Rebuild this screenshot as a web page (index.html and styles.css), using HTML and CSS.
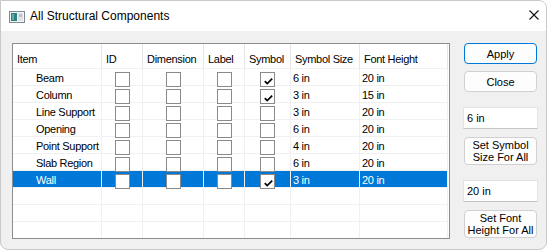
FILE: index.html
```html
<!DOCTYPE html>
<html lang="en">
<head>
  <meta charset="UTF-8">
  <meta name="viewport" content="width=device-width, initial-scale=1.0">
  <title>All Structural Components</title>
  <link rel="stylesheet" href="styles.css">
</head>
<body>
  <div class="window">
    <div class="titlebar">
      <svg class="app-icon" width="16" height="12" viewBox="0 0 16 12">
        <rect x="0.5" y="0.5" width="15" height="11" fill="#f4f4f4" stroke="#7d8a90"/>
        <rect x="2" y="2" width="6" height="8" fill="#2f7f86"/>
        <rect x="3" y="3" width="2" height="6" fill="#5fb0a0"/>
        <rect x="9" y="2" width="5" height="8" fill="#dfe3e6"/>
        <rect x="10" y="3" width="3" height="3" fill="#b9c3c9"/>
      </svg>
      <span class="title">All Structural Components</span>
      <svg class="close" width="10" height="10" viewBox="0 0 10 10">
        <path d="M0.5 0.5 L9.5 9.5 M9.5 0.5 L0.5 9.5" stroke="#111" stroke-width="1.1" fill="none"/>
      </svg>
    </div>

    <div class="content">
      <div class="list">
        <table class="grid">
          <colgroup>
            <col class="c-item"><col class="c-id"><col class="c-dim"><col class="c-label">
            <col class="c-sym"><col class="c-size"><col class="c-font">
          </colgroup>
          <thead>
            <tr>
              <th>Item</th><th>ID</th><th>Dimension</th><th>Label</th>
              <th>Symbol</th><th>Symbol Size</th><th>Font Height</th>
            </tr>
          </thead>
          <tbody>
            <tr>
              <td class="item">Beam</td>
              <td class="chk"><span class="box"></span></td>
              <td class="chk"><span class="box"></span></td>
              <td class="chk"><span class="box"></span></td>
              <td class="chk"><span class="box checked"><svg width="9" height="7" viewBox="0 0 9 7"><polyline points="0.8,3.2 3.2,5.6 8.2,0.6" fill="none" stroke="#000" stroke-width="1.7"/></svg></span></td>
              <td class="val">6 in</td>
              <td class="val">20 in</td>
            </tr>
            <tr>
              <td class="item">Column</td>
              <td class="chk"><span class="box"></span></td>
              <td class="chk"><span class="box"></span></td>
              <td class="chk"><span class="box"></span></td>
              <td class="chk"><span class="box checked"><svg width="9" height="7" viewBox="0 0 9 7"><polyline points="0.8,3.2 3.2,5.6 8.2,0.6" fill="none" stroke="#000" stroke-width="1.7"/></svg></span></td>
              <td class="val">3 in</td>
              <td class="val">15 in</td>
            </tr>
            <tr>
              <td class="item">Line Support</td>
              <td class="chk"><span class="box"></span></td>
              <td class="chk"><span class="box"></span></td>
              <td class="chk"><span class="box"></span></td>
              <td class="chk"><span class="box"></span></td>
              <td class="val">3 in</td>
              <td class="val">20 in</td>
            </tr>
            <tr>
              <td class="item">Opening</td>
              <td class="chk"><span class="box"></span></td>
              <td class="chk"><span class="box"></span></td>
              <td class="chk"><span class="box"></span></td>
              <td class="chk"><span class="box"></span></td>
              <td class="val">6 in</td>
              <td class="val">20 in</td>
            </tr>
            <tr>
              <td class="item">Point Support</td>
              <td class="chk"><span class="box"></span></td>
              <td class="chk"><span class="box"></span></td>
              <td class="chk"><span class="box"></span></td>
              <td class="chk"><span class="box"></span></td>
              <td class="val">4 in</td>
              <td class="val">20 in</td>
            </tr>
            <tr>
              <td class="item">Slab Region</td>
              <td class="chk"><span class="box"></span></td>
              <td class="chk"><span class="box"></span></td>
              <td class="chk"><span class="box"></span></td>
              <td class="chk"><span class="box"></span></td>
              <td class="val">6 in</td>
              <td class="val">20 in</td>
            </tr>
            <tr class="selected">
              <td class="item">Wall</td>
              <td class="chk"><span class="box"></span></td>
              <td class="chk"><span class="box"></span></td>
              <td class="chk"><span class="box"></span></td>
              <td class="chk"><span class="box checked"><svg width="9" height="7" viewBox="0 0 9 7"><polyline points="0.8,3.2 3.2,5.6 8.2,0.6" fill="none" stroke="#000" stroke-width="1.7"/></svg></span></td>
              <td class="val">3 in</td>
              <td class="val">20 in</td>
            </tr>
            <tr class="empty"><td></td><td></td><td></td><td></td><td></td><td></td><td></td></tr>
            <tr class="empty"><td></td><td></td><td></td><td></td><td></td><td></td><td></td></tr>
            <tr class="empty"><td></td><td></td><td></td><td></td><td></td><td></td><td></td></tr>
          </tbody>
        </table>
      </div>

      <div class="side">
        <button type="button" class="btn default">Apply</button>
        <button type="button" class="btn">Close</button>
        <input type="text" class="field" value="6 in">
        <button type="button" class="btn tall">Set Symbol<br>Size For All</button>
        <input type="text" class="field" value="20 in">
        <button type="button" class="btn tall">Set Font<br>Height For All</button>
      </div>
    </div>
  </div>
</body>
</html>
```

FILE: styles.css
```css
body {
  margin: 0;
  background: #ffffff;
  font-family: "Liberation Sans", Arial, sans-serif;
  font-size: 11px;
  color: #000;
}

.window {
  width: 545px;
  height: 248px;
  border: 1px solid #c9c9c9;
  border-radius: 0 8px 8px 8px;
  background: #f0f0f0;
  overflow: hidden;
  display: flex;
  flex-direction: column;
}

/* title bar */
.titlebar {
  height: 30px;
  flex: none;
  background: #ffffff;
  display: flex;
  align-items: center;
  padding-left: 8px;
}

.app-icon {
  margin-right: 5px;
  margin-top: 1px;
}

.title {
  font-size: 12px;
  color: #000;
}

.close {
  margin-left: auto;
  margin-right: 7px;
  margin-bottom: 2px;
}

/* main area */
.content {
  display: flex;
  padding: 12px 0 0 11px;
}

.list {
  width: 436px;
  height: 194px;
  border: 1px solid #8a8f96;
  background: #ffffff;
  overflow: hidden;
}

.grid {
  table-layout: fixed;
  width: 435px;
  border-collapse: separate;
  border-spacing: 0;
  letter-spacing: -0.3px;
}

.c-item { width: 89px; }
.c-id { width: 41px; }
.c-dim { width: 61px; }
.c-label { width: 41px; }
.c-sym { width: 46px; }
.c-size { width: 69px; }
.c-font { width: 88px; }

.grid th {
  font-weight: normal;
  text-align: left;
  height: 16px;
  line-height: 16px;
  padding: 7px 0 1px 4px;
  border-right: 1px solid #e5e5e5;
  border-bottom: 1px solid #f0f0f0;
  white-space: nowrap;
  overflow: hidden;
  color: #000;
}

.grid td {
  height: 16px;
  padding: 0;
  border-right: 1px solid #f0f0f0;
  border-bottom: 1px solid #f0f0f0;
  vertical-align: top;
  white-space: nowrap;
  overflow: hidden;
}

.grid td.item,
.grid td.val {
  height: 13px;
  line-height: 13px;
  padding-top: 3px;
}

.grid td.item {
  padding-left: 23px;
}

.grid td.val {
  padding-left: 2px;
}

.grid td.chk {
  overflow: visible;
}

.box {
  display: block;
  box-sizing: border-box;
  width: 15px;
  height: 15px;
  margin: 3px auto -2px;
  border: 1px solid #8a8a8a;
  background: #ffffff;
  position: relative;
}

.box svg {
  position: absolute;
  left: 3px;
  top: 5px;
}

.selected td {
  background: #0078d7;
  color: #ffffff;
}

/* right column */
.side {
  width: 75px;
  margin-left: 13px;
  display: flex;
  flex-direction: column;
  align-items: center;
}

.btn {
  box-sizing: border-box;
  width: 73px;
  height: 21px;
  margin: 0 0 7px;
  padding: 0;
  font-family: "Liberation Sans", Arial, sans-serif;
  font-size: 11px;
  line-height: 12px;
  color: #000;
  background: #fdfdfd;
  border: 1px solid #d0d0d0;
  border-radius: 4px;
}

.btn.default {
  border-color: #0078d7;
}

.btn.tall {
  height: 28px;
}

.field {
  box-sizing: border-box;
  width: 75px;
  height: 22px;
  margin: 8px 0 8px;
  padding: 0 3px;
  font-family: "Liberation Sans", Arial, sans-serif;
  font-size: 11px;
  color: #000;
  background: #ffffff;
  border: 1px solid #e3e3e3;
  border-bottom-color: #c4c4c4;
  outline: none;
}
```
